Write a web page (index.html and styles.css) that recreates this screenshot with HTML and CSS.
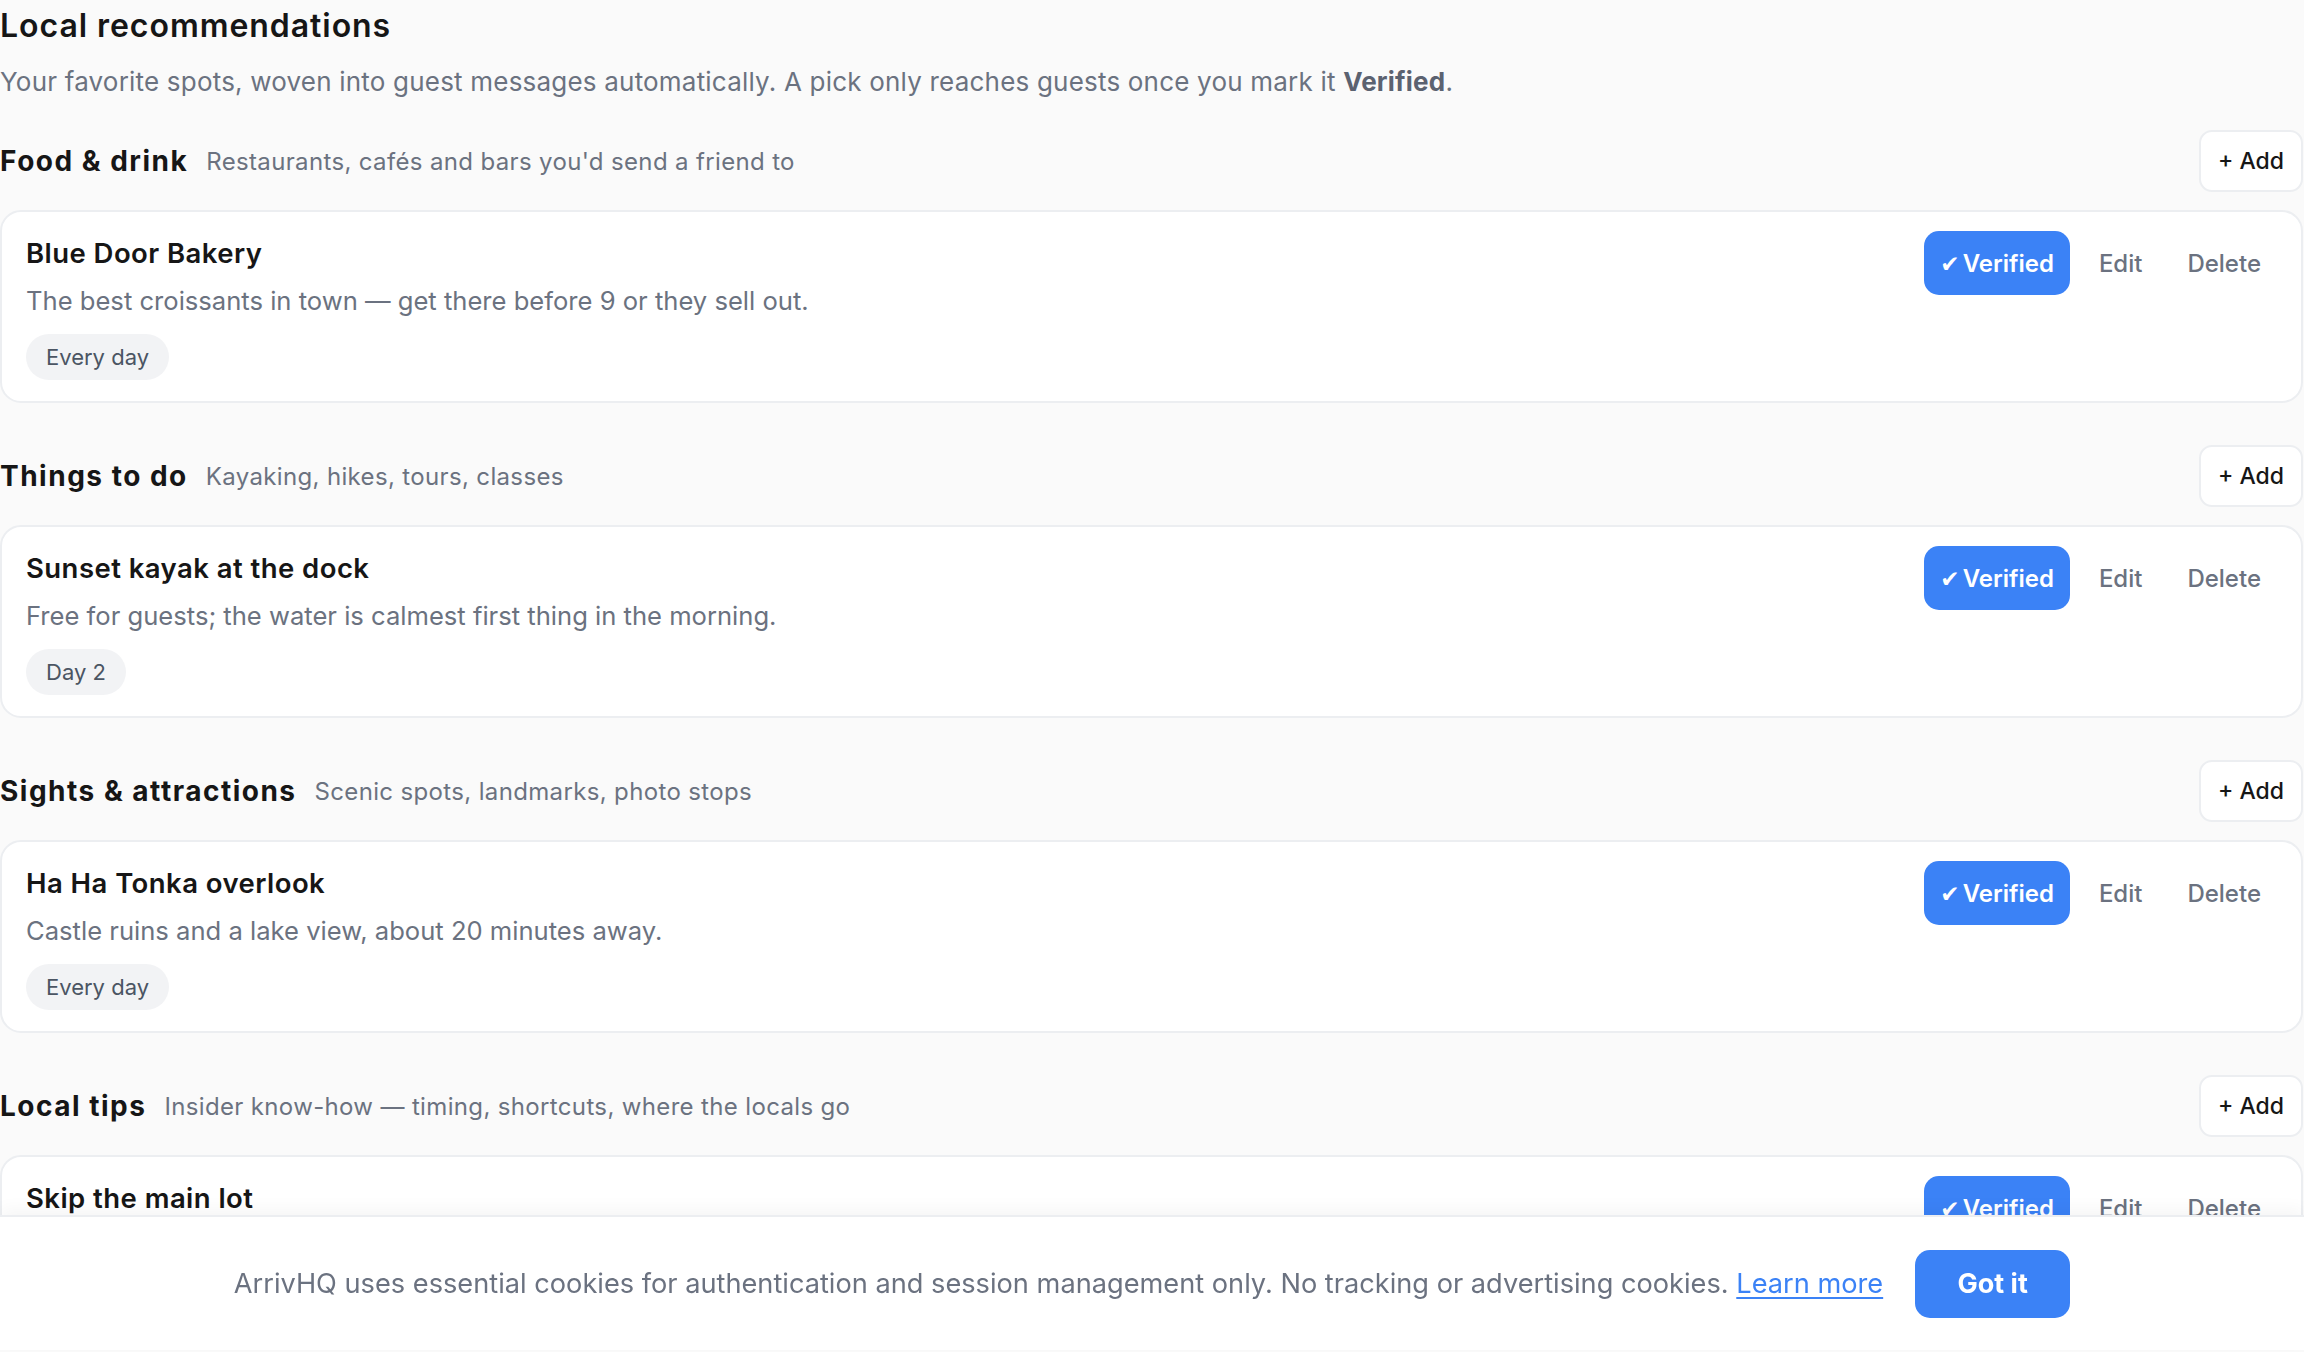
FILE: index.html
```html
<!DOCTYPE html>
<html lang="en">
<head>
  <meta charset="UTF-8">
  <title>Local recommendations</title>
  <link rel="stylesheet" href="styles.css">
</head>
<body>
  <div class="page">
    <h1 class="page-title">Local recommendations</h1>
    <p class="page-sub">Your favorite spots, woven into guest messages automatically. A pick only reaches guests once you mark it <strong>Verified</strong>.</p>

    <section class="group">
      <div class="group-head">
        <h2>Food &amp; drink</h2>
        <span class="group-desc">Restaurants, cafés and bars you'd send a friend to</span>
        <button class="btn-add">+ Add</button>
      </div>
      <div class="card">
        <div class="card-body">
          <h3>Blue Door Bakery</h3>
          <p>The best croissants in town — get there before 9 or they sell out.</p>
          <span class="tag">Every day</span>
        </div>
        <div class="card-actions">
          <button class="btn-verified"><span class="check">✔</span>Verified</button>
          <button class="btn-plain">Edit</button>
          <button class="btn-plain">Delete</button>
        </div>
      </div>
    </section>

    <section class="group">
      <div class="group-head">
        <h2>Things to do</h2>
        <span class="group-desc">Kayaking, hikes, tours, classes</span>
        <button class="btn-add">+ Add</button>
      </div>
      <div class="card">
        <div class="card-body">
          <h3>Sunset kayak at the dock</h3>
          <p>Free for guests; the water is calmest first thing in the morning.</p>
          <span class="tag">Day 2</span>
        </div>
        <div class="card-actions">
          <button class="btn-verified"><span class="check">✔</span>Verified</button>
          <button class="btn-plain">Edit</button>
          <button class="btn-plain">Delete</button>
        </div>
      </div>
    </section>

    <section class="group">
      <div class="group-head">
        <h2>Sights &amp; attractions</h2>
        <span class="group-desc">Scenic spots, landmarks, photo stops</span>
        <button class="btn-add">+ Add</button>
      </div>
      <div class="card">
        <div class="card-body">
          <h3>Ha Ha Tonka overlook</h3>
          <p>Castle ruins and a lake view, about 20 minutes away.</p>
          <span class="tag">Every day</span>
        </div>
        <div class="card-actions">
          <button class="btn-verified"><span class="check">✔</span>Verified</button>
          <button class="btn-plain">Edit</button>
          <button class="btn-plain">Delete</button>
        </div>
      </div>
    </section>

    <section class="group">
      <div class="group-head">
        <h2>Local tips</h2>
        <span class="group-desc">Insider know-how — timing, shortcuts, where the locals go</span>
        <button class="btn-add">+ Add</button>
      </div>
      <div class="card">
        <div class="card-body">
          <h3>Skip the main lot</h3>
          <p>Park on the side street by the marina — it's free and closer to the trail.</p>
          <span class="tag">Every day</span>
        </div>
        <div class="card-actions">
          <button class="btn-verified"><span class="check">✔</span>Verified</button>
          <button class="btn-plain">Edit</button>
          <button class="btn-plain">Delete</button>
        </div>
      </div>
    </section>
  </div>

  <!-- cookie notice sits over the page -->
  <div class="cookie-bar">
    <p>ArrivHQ uses essential cookies for authentication and session management only. No tracking or advertising cookies. <a href="#">Learn more</a></p>
    <button class="btn-ok">Got it</button>
  </div>
</body>
</html>
```

FILE: styles.css
```css
/* Base */
body {
  margin: 0;
  background: #fafafa;
  font-family: Inter, "Liberation Sans", sans-serif;
  color: #161616;
}

button {
  font-family: inherit;
  cursor: pointer;
}

.page {
  padding: 6px 1px 200px 0;
}

/* Page heading */
.page-title {
  margin: 0;
  font-size: 32px;
  line-height: 40px;
  font-weight: 600;
  letter-spacing: 0.95px;
  color: #161616;
}

.page-sub {
  margin: 18px 0 0;
  font-size: 26px;
  line-height: 36px;
  letter-spacing: 0.2px;
  color: #6b7280;
}

.page-sub strong {
  font-weight: 700;
  color: #5b6270;
}

/* Groups */
.group {
  margin-top: 30px;
}

.group + .group {
  margin-top: 42px;
}

.group-head {
  display: flex;
  align-items: center;
  gap: 18px;
  height: 62px;
  margin-bottom: 18px;
}

.group-head h2 {
  margin: 0;
  font-size: 28px;
  font-weight: 700;
  letter-spacing: 1.5px;
  color: #161616;
}

.group-desc {
  font-size: 24px;
  letter-spacing: 0.35px;
  color: #6b7280;
}

.btn-add {
  margin-left: auto;
  height: 62px;
  padding: 0 17px;
  background: #fff;
  border: 2px solid #eceef1;
  border-radius: 13px;
  font-size: 23px;
  font-weight: 500;
  color: #161616;
}

/* Cards */
.card {
  display: flex;
  justify-content: space-between;
  align-items: flex-start;
  background: #fff;
  border: 2px solid #eceef1;
  border-radius: 21px;
  padding: 19px 24px 21px;
}

.card-body h3 {
  margin: 2px 0 0;
  font-size: 27.5px;
  line-height: 40px;
  font-weight: 600;
  letter-spacing: 0.45px;
  color: #161616;
}

.card-body p {
  margin: 10px 0 0;
  font-size: 25.6px;
  line-height: 36px;
  color: #6b7280;
}

.tag {
  display: inline-block;
  margin-top: 15px;
  height: 46px;
  line-height: 46px;
  padding: 0 20px;
  border-radius: 23px;
  background: #f2f3f5;
  font-size: 22px;
  color: #4b5563;
}

.card-actions {
  display: flex;
  align-items: center;
  gap: 13px;
}

.btn-verified {
  height: 64px;
  padding: 0 16px;
  border: none;
  border-radius: 15px;
  background: #3b82f6;
  color: #fff;
  font-size: 24px;
  font-weight: 600;
}

.check {
  font-family: "DejaVu Sans", sans-serif;
  font-size: 23px;
  margin-right: 3px;
}

.btn-plain {
  height: 64px;
  padding: 0 16px;
  border: none;
  background: none;
  color: #6b7280;
  font-size: 24px;
  font-weight: 500;
}

/* Cookie bar */
.cookie-bar {
  position: fixed;
  left: 0;
  right: 0;
  bottom: 2px;
  height: 133px;
  display: flex;
  align-items: center;
  justify-content: center;
  gap: 32px;
  background: #fff;
  border-top: 2px solid #eceef1;
  box-shadow: 0 -6px 16px rgba(0, 0, 0, 0.04);
}

.cookie-bar p {
  margin: 0;
  font-size: 27.2px;
  color: #6b7280;
}

.cookie-bar a {
  color: #3b82f6;
  text-decoration: underline;
  text-underline-offset: 4px;
}

.btn-ok {
  width: 155px;
  height: 68px;
  border: none;
  border-radius: 15px;
  background: #3b82f6;
  color: #fff;
  font-size: 27px;
  font-weight: 700;
}
```
